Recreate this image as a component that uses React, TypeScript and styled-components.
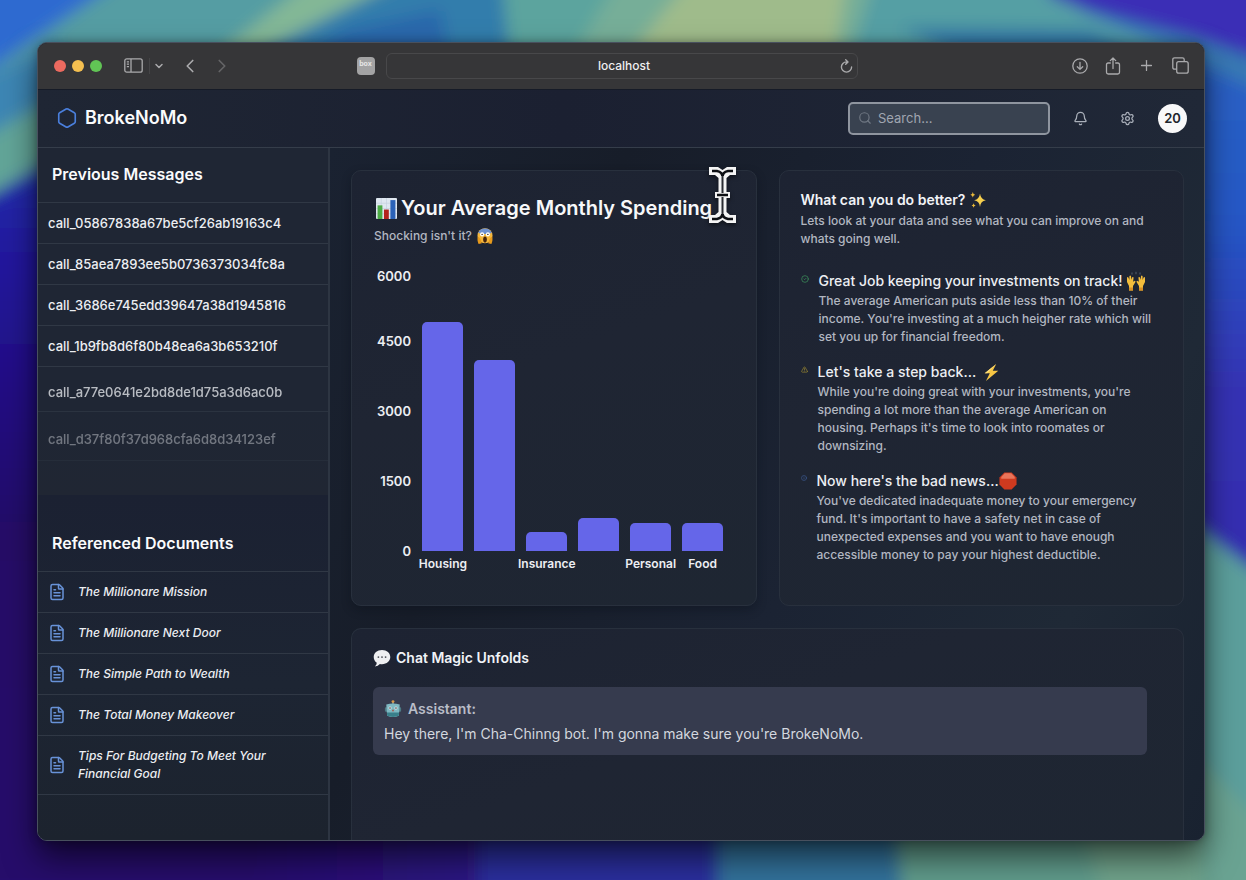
import React from 'react';
import styled, { createGlobalStyle } from 'styled-components';
import {
  Bell,
  ChevronDown,
  ChevronLeft,
  ChevronRight,
  CircleCheck,
  FileText,
  Hexagon,
  Info,
  Plus,
  RotateCw,
  Search,
  Settings,
  TriangleAlert,
} from 'lucide-react';

const GlobalStyle = createGlobalStyle`
  *, *::before, *::after { box-sizing: border-box; }
  body {
    margin: 0;
    background: #1d0a4e;
    color: #f1f3f7;
    font-family: Inter, "Liberation Sans", sans-serif;
    font-size: 13px;
    line-height: 18px;
  }
  h1, h2, h3, p, ul { margin: 0; padding: 0; }
  ul { list-style: none; }
  button, input { font: inherit; color: inherit; }
`;

const Desktop = styled.div`
  position: relative;
  isolation: isolate;
  display: flex;
  min-height: 100vh;
  padding: 42px 41px 39px 37px;
`;

const WallpaperArt = styled.svg`
  position: absolute;
  inset: 0;
  z-index: -1;
  width: 100%;
  height: 100%;
`;

const Window = styled.div`
  position: relative;
  flex: 1;
  min-width: 0;
  display: flex;
  flex-direction: column;
  border-radius: 10px;
  overflow: hidden;
  background: #19202d;
  border: 1px solid #48505e;
  box-shadow: 0 16px 32px rgba(0, 0, 0, 0.6), 0 0 10px rgba(0, 0, 0, 0.3);
`;

const Toolbar = styled.div`
  display: grid;
  grid-template-columns: 1fr minmax(0, 472px) 1fr;
  align-items: center;
  height: 47px;
  padding: 0 15px 1px 16px;
  background: #363638;
  border-bottom: 1px solid #161b27;
  color: #aaaaac;
`;

const ToolGroup = styled.div<{ $end?: boolean }>`
  display: flex;
  align-items: center;
  gap: ${(p) => (p.$end ? 17 : 0)}px;
  justify-content: ${(p) => (p.$end ? 'flex-end' : 'flex-start')};
`;

const Lights = styled.div`
  display: flex;
  gap: 6px;
  margin-right: 22px;
`;

const Light = styled.button<{ $color: string }>`
  width: 12px;
  height: 12px;
  padding: 0;
  border: 0;
  border-radius: 50%;
  background: ${(p) => p.$color};
`;

const IconButton = styled.button<{ $gap?: number; $dim?: boolean }>`
  display: flex;
  align-items: center;
  justify-content: center;
  padding: 0;
  margin-right: ${(p) => p.$gap ?? 0}px;
  border: 0;
  background: none;
  opacity: ${(p) => (p.$dim ? 0.4 : 1)};
`;

const ToolDivider = styled.span`
  width: 1px;
  height: 16px;
  margin: 0 3px 0 6px;
  background: #454547;
`;

const Extension = styled.button`
  width: 18px;
  height: 18px;
  margin-left: auto;
  margin-right: 11px;
  padding: 0 0 4px;
  border: 0;
  border-radius: 4px;
  background: #a3a3a4;
  color: #e6e6e6;
  font-size: 7px;
  font-weight: 700;
  line-height: 12px;
`;

const AddressBar = styled.div`
  display: flex;
  align-items: center;
  height: 26px;
  padding: 0 4px 0 22px;
  border: 1px solid #48484a;
  border-radius: 6px;
`;

const Address = styled.input`
  flex: 1;
  min-width: 0;
  padding: 0;
  border: 0;
  outline: 0;
  background: none;
  color: #efeff0;
  font-size: 12px;
  font-weight: 500;
  text-align: center;
`;

const Header = styled.header`
  display: flex;
  align-items: center;
  height: 58px;
  padding: 0 17px 1px 18px;
  background: linear-gradient(90deg, #1f2634, #1b2031 45%, #202837);
  border-bottom: 1px solid #353d4a;
`;

const Brand = styled.a`
  display: flex;
  align-items: center;
  gap: 7px;
  margin-right: auto;
  color: #fafbfc;
  font-size: 18px;
  font-weight: 600;
  line-height: 24px;
  text-decoration: none;
`;

const SearchBox = styled.label`
  display: flex;
  align-items: center;
  gap: 6px;
  width: 202px;
  height: 33px;
  margin-right: 22px;
  padding: 0 8px;
  border: 2px solid #8f959f;
  border-radius: 5px;
  background: #394250;
  color: #6f7783;
`;

const SearchInput = styled.input`
  flex: 1;
  min-width: 0;
  padding: 0;
  border: 0;
  outline: 0;
  background: none;
  &::placeholder { color: #a0a6b0; opacity: 1; }
`;

const HeaderButton = styled(IconButton)`
  width: 16px;
  color: #aab0ba;
`;

const Avatar = styled.button`
  width: 29px;
  height: 29px;
  padding: 0;
  border: 0;
  border-radius: 50%;
  background: #f8f8f9;
  color: #20242c;
  font-weight: 600;
`;

const Body = styled.div`
  flex: 1;
  display: flex;
`;

const Sidebar = styled.aside`
  width: 292px;
  flex: none;
  display: flex;
  flex-direction: column;
  border-right: 2px solid #2d3542;
  background: #1c2331;
`;

const Messages = styled.section`
  padding-bottom: 34px;
  background: linear-gradient(#1f2634, #1f2634 75%, #202633);
`;

const Documents = styled.section`
  flex: 1;
  padding-top: 22px;
  background: linear-gradient(#1b2132, #1d2533 55%, #1c232e);
`;

const SideTitle = styled.h2`
  height: 55px;
  padding: 14px 14px 0;
  border-bottom: 1px solid #303845;
  color: #fafbfc;
  font-size: 16px;
  font-weight: 600;
  line-height: 24px;
`;

const MessageRow = styled.li<{ $faded: boolean; $height: number; $opacity: number }>`
  display: flex;
  align-items: center;
  height: ${(p) => p.$height}px;
  padding: ${(p) => (p.$faded ? 5 : 0)}px 10px 0;
  border-bottom: 1px solid #303845;
  opacity: ${(p) => p.$opacity};
`;

const MessageLink = styled.a`
  color: #eceef2;
  font-size: 13px;
  font-weight: 500;
  text-decoration: none;
`;

const DocumentRow = styled.li`
  border-bottom: 1px solid #303845;
`;

const DocumentLink = styled.a`
  display: flex;
  align-items: center;
  gap: 12px;
  min-height: 40px;
  padding: 11px 50px 11px 10px;
  color: #eceef2;
  font-size: 12px;
  font-style: italic;
  font-weight: 500;
  text-decoration: none;
  svg { flex: none; color: #6892d8; }
`;

const Main = styled.main`
  flex: 1;
  min-width: 0;
  display: grid;
  grid-template-columns: 1fr 1fr;
  grid-template-rows: auto 1fr;
  gap: 22px;
  padding: 22px 20px 0 21px;
  background: linear-gradient(115deg, #1a2231, #171d29 25%, #1b2333 55%, #1f2936 80%, #192230);
`;

const Card = styled.section`
  border: 1px solid #28303d;
  border-radius: 10px;
  background: linear-gradient(160deg, #1d2332, #1f2533 45%, #1e2632);
`;

const SpendingCard = styled(Card)`
  position: relative;
  padding: 23px 27px 32px 22px;
  box-shadow: 0 4px 10px rgba(10, 14, 22, 0.35);
`;

const SpendingTitle = styled.h1`
  display: flex;
  align-items: center;
  gap: 4px;
  padding-left: 2px;
  color: #f7f8fa;
  font-size: 20px;
  font-weight: 600;
  line-height: 28px;
  white-space: nowrap;
`;

const Subtitle = styled.p`
  display: flex;
  align-items: center;
  gap: 5px;
  margin-top: 5px;
  color: #b2b7c1;
  font-size: 12px;
  font-weight: 500;
`;

const Chart = styled.figure`
  display: grid;
  grid-template-columns: 37px 1fr;
  column-gap: 6px;
  margin: 26px 0 0;
  color: #eceef2;
  font-weight: 600;
`;

const Axis = styled.ul`
  display: flex;
  flex-direction: column-reverse;
  justify-content: space-between;
  height: 280px;
  text-align: right;
`;

const Tick = styled.li`
  height: 0;
  line-height: 0;
  &:last-child { line-height: 10px; }
`;

const Bars = styled.div`
  display: flex;
  height: 280px;
`;

const BarSlot = styled.div`
  flex: 1;
  display: flex;
  align-items: flex-end;
  justify-content: center;
`;

const Bar = styled.div`
  width: 79%;
  border-radius: 5px 5px 0 0;
  background: #6566e9;
`;

const Categories = styled.figcaption`
  grid-column: 2;
  display: flex;
  padding-top: 4px;
  font-size: 12px;
`;

const Category = styled.span`
  flex: 1 1 0;
  width: 0;
  display: flex;
  justify-content: center;
  white-space: nowrap;
`;

const Cursor = styled.svg`
  position: absolute;
  top: -5px;
  right: 19px;
  filter: drop-shadow(0 2px 2px rgba(0, 0, 0, 0.5));
`;

const AdviceCard = styled(Card)`
  padding: 19px 27px 20px 21px;
  color: #b2b7c1;
`;

const CardTitle = styled.h2`
  display: flex;
  align-items: center;
  gap: 5px;
  color: #f1f3f7;
  font-size: 14px;
  font-weight: 600;
  line-height: 20px;
`;

const AdviceText = styled.p`
  font-size: 12px;
  font-weight: 500;
  line-height: 18px;
`;

const AdviceIntro = styled(AdviceText)`
  margin: 2px 0 22px;
`;

const AdviceList = styled.ul`
  display: flex;
  flex-direction: column;
  gap: 15px;
`;

const AdviceItem = styled.li<{ $tone: string }>`
  display: flex;
  gap: 10px;
  > svg { flex: none; margin-top: 5px; color: ${(p) => p.$tone}; }
`;

const AdviceHeading = styled.h3`
  display: flex;
  align-items: center;
  color: #eceef2;
  font-size: 14px;
  font-weight: 500;
  line-height: 22px;
  white-space: pre;
`;

const ChatCard = styled(Card)`
  grid-column: 1 / -1;
  min-height: 212px;
  padding: 19px 36px 24px 21px;
  border-bottom: 0;
  border-radius: 10px 10px 0 0;
`;

const Bubble = styled.article`
  margin-top: 19px;
  padding: 11px 11px 10px;
  border-radius: 6px;
  background: #363b4e;
  color: #d3d7df;
  font-size: 14px;
  line-height: 22px;
`;

const Speaker = styled.h3`
  display: flex;
  align-items: center;
  gap: 6px;
  margin-bottom: 3px;
  color: #b9bdc8;
  font-size: 14px;
  font-weight: 600;
`;

const Wallpaper = () => (
  <WallpaperArt viewBox="0 0 1246 880" preserveAspectRatio="none" aria-hidden="true">
    <defs>
      <filter id="soft" x="-20%" y="-20%" width="140%" height="140%">
        <feGaussianBlur stdDeviation="8" />
      </filter>
      <linearGradient id="leftSide" x1="0" y1="0" x2="0" y2="1">
        <stop offset="0" stopColor="#2030ae" />
        <stop offset="0.15" stopColor="#21149a" />
        <stop offset="0.32" stopColor="#200f80" />
        <stop offset="0.5" stopColor="#250a66" />
        <stop offset="1" stopColor="#260d6c" />
      </linearGradient>
      <linearGradient id="rightSide" x1="0" y1="0" x2="0" y2="1">
        <stop offset="0" stopColor="#2c62c4" />
        <stop offset="0.3" stopColor="#2458c6" />
        <stop offset="0.6" stopColor="#3533b4" />
        <stop offset="1" stopColor="#362aae" />
      </linearGradient>
      <linearGradient id="bottomSide" x1="0" y1="0" x2="1" y2="0">
        <stop offset="0" stopColor="#260d6c" />
        <stop offset="1" stopColor="#2d1582" />
      </linearGradient>
    </defs>
    <rect width="1246" height="880" fill="#260d6c" />
    <g filter="url(#soft)">
      <rect x="-40" y="160" width="300" height="760" fill="url(#leftSide)" />
      <polygon points="-40,-40 1290,-40 1290,90 -40,160" fill="#559da3" />
      <polygon points="-40,-40 150,-40 -40,90" fill="#2f6bd0" />
      <polygon points="-40,90 60,40 60,110 -40,150" fill="#3d86b4" />
      <polygon points="-40,150 70,90 70,150 -40,212" fill="#62a598" />
      <polygon points="310,-20 400,-20 290,46 210,60" fill="#83b796" />
      <polygon points="400,-20 500,-20 540,60 245,60" fill="#327dac" />
      <polygon points="345,30 440,10 450,60 300,60" fill="#2b68ac" />
      <polygon points="500,-40 760,-40 760,60 510,60" fill="#5ca49e" />
      <polygon points="630,-40 960,-40 960,60 570,60" fill="#76ae98" />
      <polygon points="705,-40 850,-40 835,60 625,60" fill="#9fbb8b" />
      <polygon points="880,-40 1060,-40 1180,60 850,60" fill="#559fa4" />
      <polygon points="970,60 900,28 1090,30 1160,60" fill="#3277a5" />
      <polygon points="1040,-40 1290,-40 1290,90 1190,50 1050,-4" fill="#3a2fb6" />
      <polygon points="1190,40 1290,86 1290,620 1190,540" fill="url(#rightSide)" />
      <polygon points="1070,6 1190,36 1290,70 1290,104 1180,56" fill="#3779b4" />
      <polygon points="1180,516 1290,596 1290,920 1180,920" fill="#5b9f9c" />
      <polygon points="1190,750 1290,850 1290,920 1190,920" fill="#6aa392" />
      <rect x="260" y="820" width="220" height="100" fill="url(#bottomSide)" />
      <polygon points="478,820 720,820 720,920 478,920" fill="#2a2f9c" />
      <polygon points="718,820 900,820 910,920 718,920" fill="#31719a" />
      <polygon points="895,820 1200,820 1220,920 905,920" fill="#619b8b" />
      <polygon points="1080,820 1200,820 1206,920 1110,920" fill="#70a38b" />
    </g>
  </WallpaperArt>
);

const emoji = (size: number) => ({ width: size, height: size, viewBox: '0 0 20 20', 'aria-hidden': true });

const ChartEmoji = () => (
  <svg {...emoji(21)}>
    <rect width="20" height="20" rx="1" fill="#dfe7f0" />
    <path d="M0 5h20M0 10h20M0 15h20M5 0v20M10 0v20" stroke="#c3cfdd" strokeWidth="0.6" />
    <rect x="1.5" y="7" width="4.6" height="13" fill="#4cab45" />
    <rect x="7.6" y="11" width="4.6" height="9" fill="#b3221d" />
    <rect x="13.7" y="2" width="4.8" height="18" fill="#2b62b8" />
  </svg>
);

const ScreamEmoji = () => (
  <svg {...emoji(16)}>
    <circle cx="10" cy="9.6" r="9.4" fill="#f6b73c" />
    <path d="M1.4 6.2A9.4 9.4 0 0 1 18.6 6.2Q10 9 1.4 6.2z" fill="#6f92d2" />
    <circle cx="6.4" cy="8" r="2.6" fill="#fff" />
    <circle cx="13.6" cy="8" r="2.6" fill="#fff" />
    <circle cx="6.4" cy="8" r="0.9" fill="#3a2614" />
    <circle cx="13.6" cy="8" r="0.9" fill="#3a2614" />
    <ellipse cx="10" cy="14.5" rx="2.3" ry="3.8" fill="#46260f" />
    <path d="M1 11c2 0 4 3 5 8l-4 1C1 18 0 14 1 11zM19 11c-2 0-4 3-5 8l4 1c1-2 2-6 1-9z" fill="#e79a1c" />
  </svg>
);

const SparkleEmoji = () => (
  <svg {...emoji(16)}>
    <path d="M12.5 2q.8 7.2 7.3 8.3q-6.5 1-7.3 8.3q-.8-7.3-7.3-8.3q6.5-1.1 7.3-8.3z" fill="#f6cf4e" />
    <path d="M3.5 0q.4 3 3 3.5q-2.6.5-3 3.5q-.4-3-3-3.5q2.6-.5 3-3.5zM4.5 14q.3 2.3 2.5 2.8q-2.2.4-2.5 2.8q-.3-2.4-2.5-2.8q2.2-.5 2.5-2.8z" fill="#e9b93a" />
  </svg>
);

const HandsEmoji = () => (
  <svg {...emoji(20)}>
    <path d="M6 1.5v2M10 .8v2.4M14 1.5v2" stroke="#65707c" strokeWidth="0.8" />
    <g fill="#f4bd3c">
      <path d="M1 6.5q1-1 1.6.4l.8 2V5.200q.9-1.200 1.600 0l.4 3.600 .8-2.600q1-.8 1.400.4l-.5 4.200 1.600-1q1.300.2.6 1.500L7 15v4.500H3V15L1 11z" />
      <path d="M19 6.500q-1-1-1.600.4l-.8 2V5.200q-.9-1.200-1.600 0l-.4 3.600-.8-2.600q-1-.8-1.400.4l.5 4.200-1.600-1q-1.300.2-.6 1.500L13 15v4.500h4V15l2-4z" />
    </g>
    <path d="M3 16.5h4v3H3zM13 16.5h4v3h-4z" fill="#d98f22" />
  </svg>
);

const BoltEmoji = () => (
  <svg {...emoji(17)}>
    <path d="M15.5 0L2 11h6L3.5 20L18 8h-6.5z" fill="#f7c644" />
    <path d="M15.5 0L2 11h3z" fill="#f9dc7c" />
  </svg>
);

const StopEmoji = () => (
  <svg {...emoji(18)}>
    <path d="M6 .5h8L19.5 6v8L14 19.5H6L.5 14V6z" fill="#cf3a1f" />
    <path d="M6.5 1.5h7L17.5 5.5v2h-15v-2z" fill="#e8745a" />
  </svg>
);

const SpeechEmoji = () => (
  <svg {...emoji(18)}>
    <path d="M10 1C4.6 1 .8 4.3.8 9c0 2.8 1.3 5 3.4 6.4q0 2.2-2.2 4q3.6-.2 5.7-2.7q1.100.2 2.300.2c5.400 0 9.200-3.300 9.200-7.900S15.400 1 10 1z" fill="#eeeff1" />
    <circle cx="6" cy="9" r="1" fill="#4a4e56" />
    <circle cx="10" cy="9" r="1" fill="#4a4e56" />
    <circle cx="14" cy="9" r="1" fill="#4a4e56" />
  </svg>
);

const RobotEmoji = () => (
  <svg {...emoji(18)}>
    <rect x="9.3" y="2" width="1.4" height="4" fill="#8aa" />
    <circle cx="10" cy="1.8" r="1.6" fill="#d99a4a" />
    <rect x="1" y="8" width="3" height="5" rx="1" fill="#4d7a84" />
    <rect x="16" y="8" width="3" height="5" rx="1" fill="#4d7a84" />
    <path d="M2.5 5q7.5-2 15 0l-1 12.500q-6.500 3-13 0z" fill="#7fb8c2" />
    <path d="M3.200 14h13.600l-.4 3.500q-6.400 2.500-12.800 0z" fill="#397f8a" />
    <circle cx="6.7" cy="9" r="2" fill="#b6dbe1" />
    <circle cx="13.3" cy="9" r="2" fill="#b6dbe1" />
    <circle cx="6.7" cy="9" r="0.9" fill="#8a4a48" />
    <circle cx="13.3" cy="9" r="0.9" fill="#8a4a48" />
    <path d="M10 10l-1.3 2.5h2.6z" fill="#a64b3d" />
  </svg>
);

const SidebarGlyph = () => (
  <svg width="19" height="15" viewBox="0 0 19 15" fill="none" stroke="currentColor" strokeWidth="1.3" aria-hidden="true">
    <rect x="0.8" y="0.8" width="17.4" height="13.4" rx="2" />
    <path d="M7 1v13M2.8 3.8h2.2M2.8 6.2h2.2M2.8 8.6h2.2" />
  </svg>
);

const DownloadGlyph = () => (
  <svg width="16" height="16" viewBox="0 0 16 16" fill="none" stroke="currentColor" strokeWidth="1.3" strokeLinecap="round" strokeLinejoin="round" aria-hidden="true">
    <circle cx="8" cy="8" r="7.2" />
    <path d="M8 4.3v7M5.3 8.7L8 11.4l2.7-2.7" />
  </svg>
);

const ShareGlyph = () => (
  <svg width="16" height="18" viewBox="0 0 16 18" fill="none" stroke="currentColor" strokeWidth="1.3" strokeLinecap="round" strokeLinejoin="round" aria-hidden="true">
    <path d="M5.3 6H3.2Q1.5 6 1.5 7.7v7.6Q1.5 17 3.2 17h9.6q1.7 0 1.7-1.7V7.7Q14.5 6 12.8 6h-2.1M8 11.5V1M5.3 3.6L8 1l2.7 2.6" />
  </svg>
);

const TabsGlyph = () => (
  <svg width="17" height="17" viewBox="0 0 17 17" fill="none" stroke="currentColor" strokeWidth="1.3" aria-hidden="true">
    <rect x="4.7" y="4.7" width="11.5" height="11.5" rx="2" />
    <path d="M4.7 12.2H2.6q-1.8 0-1.8-1.8V2.6Q.8.8 2.6.8h7.8q1.8 0 1.8 1.8v2.100" />
  </svg>
);

const ReloadGlyph = () => (
  <svg width="13" height="14" viewBox="0 0 13 14" fill="none" stroke="currentColor" strokeWidth="1.4" strokeLinecap="round" strokeLinejoin="round" aria-hidden="true">
    <path d="M11.6 8a5.100 5.100 0 1 1-5.100-5.100h1.300M5.700.8l2.300 2.100-2.300 2.300" />
  </svg>
);

const TextCursor = () => (
  <Cursor width="29" height="58" viewBox="0 0 29 58" fill="none" aria-hidden="true">
    <path
      d="M1 1H10L14.5 4L19 1H28V9H22L18.5 12V26H22V32H18.5V46L22 49H28V57H19L14.5 54L10 57H1V49H7L10.5 46V32H7V26H10.5V12L7 9H1Z"
      fill="#f4f4f4"
    />
    <path
      d="M4 5H9Q14.5 6 14.5 11Q14.5 6 20 5H25M4 53H9Q14.5 52 14.5 47Q14.5 52 20 53H25M9 29H20"
      stroke="#0d0f13"
      strokeWidth="2.6"
    />
    <path d="M14.5 10V27M14.5 31V48" stroke="#8d8f93" strokeWidth="3" />
    <path d="M14.5 10V27M14.5 31V48" stroke="#2a2c31" strokeWidth="1" />
  </Cursor>
);

const messages = [
  { id: 'call_05867838a67be5cf26ab19163c4', height: 41, opacity: 1 },
  { id: 'call_85aea7893ee5b0736373034fc8a', height: 41, opacity: 1 },
  { id: 'call_3686e745edd39647a38d1945816', height: 41, opacity: 1 },
  { id: 'call_1b9fb8d6f80b48ea6a3b653210f', height: 41, opacity: 1 },
  { id: 'call_a77e0641e2bd8de1d75a3d6ac0b', height: 45, opacity: 0.75 },
  { id: 'call_d37f80f37d968cfa6d8d34123ef', height: 49, opacity: 0.4 },
];

const documents = [
  'The Millionare Mission',
  'The Millionare Next Door',
  'The Simple Path to Wealth',
  'The Total Money Makeover',
  'Tips For Budgeting To Meet Your Financial Goal',
];

const axisMax = 6000;
const ticks = [0, 1500, 3000, 4500, 6000];
const spending = [
  { amount: 4900, label: 'Housing' },
  { amount: 4100, label: '' },
  { amount: 400, label: 'Insurance' },
  { amount: 700, label: '' },
  { amount: 600, label: 'Personal' },
  { amount: 600, label: 'Food' },
];

const advice = [
  {
    icon: <CircleCheck size={8} />,
    tone: '#3f9a5f',
    title: 'Great Job keeping your investments on track! ',
    emoji: <HandsEmoji />,
    text: "The average American puts aside less than 10% of their income. You're investing at a much heigher rate which will set you up for financial freedom.",
  },
  {
    icon: <TriangleAlert size={7} />,
    tone: '#b19a33',
    title: "Let's take a step back...  ",
    emoji: <BoltEmoji />,
    text: "While you're doing great with your investments, you're spending a lot more than the average American on housing. Perhaps it's time to look into roomates or downsizing.",
  },
  {
    icon: <Info size={6} />,
    tone: '#4266a8',
    title: "Now here's the bad news...",
    emoji: <StopEmoji />,
    text: "You've dedicated inadequate money to your emergency fund. It's important to have a safety net in case of unexpected expenses and you want to have enough accessible money to pay your highest deductible.",
  },
];

export default function App() {
  return (
    <>
      <GlobalStyle />
      <Desktop>
        <Wallpaper />
        <Window>
          <Toolbar>
            <ToolGroup>
              <Lights>
                <Light $color="#ec6a5f" aria-label="Close" />
                <Light $color="#f4bf50" aria-label="Minimize" />
                <Light $color="#61c455" aria-label="Zoom" />
              </Lights>
              <IconButton aria-label="Sidebar"><SidebarGlyph /></IconButton>
              <ToolDivider />
              <IconButton $gap={14} aria-label="Sidebar menu"><ChevronDown size={12} strokeWidth={3} /></IconButton>
              <IconButton $gap={10} aria-label="Back"><ChevronLeft size={22} strokeWidth={1.8} /></IconButton>
              <IconButton $dim aria-label="Forward"><ChevronRight size={22} strokeWidth={1.8} /></IconButton>
              <Extension>box</Extension>
            </ToolGroup>
            <AddressBar>
              <Address aria-label="Address" defaultValue="localhost" />
              <IconButton aria-label="Reload"><ReloadGlyph /></IconButton>
            </AddressBar>
            <ToolGroup $end>
              <IconButton aria-label="Downloads"><DownloadGlyph /></IconButton>
              <IconButton aria-label="Share"><ShareGlyph /></IconButton>
              <IconButton aria-label="New tab"><Plus size={17} strokeWidth={1.8} /></IconButton>
              <IconButton aria-label="Tab overview"><TabsGlyph /></IconButton>
            </ToolGroup>
          </Toolbar>

          <Header>
            <Brand href="#">
              <Hexagon size={22} strokeWidth={1.8} color="#4a7fdc" />
              BrokeNoMo
            </Brand>
            <SearchBox>
              <Search size={14} strokeWidth={2} />
              <SearchInput type="search" placeholder="Search..." aria-label="Search" />
            </SearchBox>
            <HeaderButton $gap={31} aria-label="Notifications"><Bell size={15} /></HeaderButton>
            <HeaderButton $gap={23} aria-label="Settings"><Settings size={15} /></HeaderButton>
            <Avatar>20</Avatar>
          </Header>

          <Body>
            <Sidebar>
              <Messages>
                <SideTitle>Previous Messages</SideTitle>
                <ul>
                  {messages.map((m) => (
                    <MessageRow key={m.id} $height={m.height} $faded={m.opacity < 1} $opacity={m.opacity}>
                      <MessageLink href="#">{m.id}</MessageLink>
                    </MessageRow>
                  ))}
                </ul>
              </Messages>
              <Documents>
                <SideTitle>Referenced Documents</SideTitle>
                <ul>
                  {documents.map((title) => (
                    <DocumentRow key={title}>
                      <DocumentLink href="#">
                        <FileText size={18} />
                        {title}
                      </DocumentLink>
                    </DocumentRow>
                  ))}
                </ul>
              </Documents>
            </Sidebar>

            <Main>
              <SpendingCard>
                <SpendingTitle><ChartEmoji />Your Average Monthly Spending</SpendingTitle>
                <Subtitle>Shocking isn't it? <ScreamEmoji /></Subtitle>
                <Chart>
                  <Axis>
                    {ticks.map((t) => <Tick key={t}>{t}</Tick>)}
                  </Axis>
                  <Bars>
                    {spending.map((s, i) => (
                      <BarSlot key={i}>
                        <Bar style={{ height: `${(s.amount / axisMax) * 100}%` }} />
                      </BarSlot>
                    ))}
                  </Bars>
                  <Categories>
                    {spending.map((s, i) => <Category key={i}>{s.label}</Category>)}
                  </Categories>
                </Chart>
                <TextCursor />
              </SpendingCard>

              <AdviceCard>
                <CardTitle>What can you do better? <SparkleEmoji /></CardTitle>
                <AdviceIntro>Lets look at your data and see what you can improve on and whats going well.</AdviceIntro>
                <AdviceList>
                  {advice.map((a) => (
                    <AdviceItem key={a.title} $tone={a.tone}>
                      {a.icon}
                      <div>
                        <AdviceHeading>{a.title}{a.emoji}</AdviceHeading>
                        <AdviceText>{a.text}</AdviceText>
                      </div>
                    </AdviceItem>
                  ))}
                </AdviceList>
              </AdviceCard>

              <ChatCard>
                <CardTitle><SpeechEmoji />Chat Magic Unfolds</CardTitle>
                <Bubble>
                  <Speaker><RobotEmoji />Assistant:</Speaker>
                  <p>Hey there, I'm Cha-Chinng bot. I'm gonna make sure you're BrokeNoMo.</p>
                </Bubble>
              </ChatCard>
            </Main>
          </Body>
        </Window>
      </Desktop>
    </>
  );
}
